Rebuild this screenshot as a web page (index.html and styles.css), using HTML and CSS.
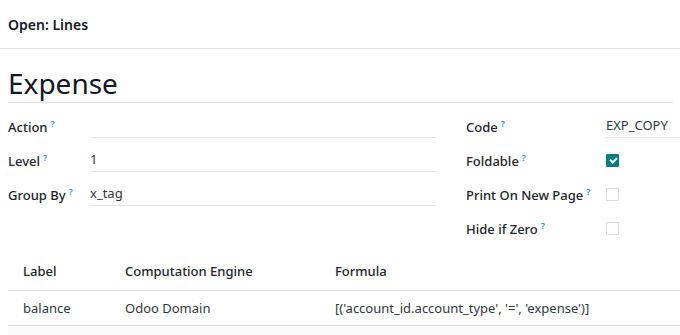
FILE: index.html
```html
<!DOCTYPE html>
<html lang="en">
<head>
    <meta charset="UTF-8">
    <title>Open: Lines</title>
    <link rel="stylesheet" href="styles.css">
</head>
<body>
    <!-- Dialog header -->
    <div class="modal-header">
        <h4>Open: Lines</h4>
    </div>

    <div class="sheet">
        <!-- Title -->
        <h1 class="title">Expense</h1>

        <!-- Fields -->
        <div class="groups">
            <div class="group group-left">
                <div class="row">
                    <label>Action<sup>?</sup></label>
                    <div class="field"></div>
                </div>
                <div class="row">
                    <label>Level<sup>?</sup></label>
                    <div class="field">1</div>
                </div>
                <div class="row">
                    <label>Group By<sup>?</sup></label>
                    <div class="field">x_tag</div>
                </div>
            </div>
            <div class="group group-right">
                <div class="row">
                    <label>Code<sup>?</sup></label>
                    <div class="field">EXP_COPY</div>
                </div>
                <div class="row">
                    <label>Foldable<sup>?</sup></label>
                    <div class="check-cell"><span class="check checked"></span></div>
                </div>
                <div class="row">
                    <label>Print On New Page<sup>?</sup></label>
                    <div class="check-cell"><span class="check"></span></div>
                </div>
                <div class="row">
                    <label>Hide if Zero<sup>?</sup></label>
                    <div class="check-cell"><span class="check"></span></div>
                </div>
            </div>
        </div>

        <!-- Expressions table -->
        <table class="lines">
            <thead>
                <tr>
                    <th class="col-label">Label</th>
                    <th class="col-engine">Computation Engine</th>
                    <th>Formula</th>
                </tr>
            </thead>
            <tbody>
                <tr>
                    <td>balance</td>
                    <td>Odoo Domain</td>
                    <td>[('account_id.account_type', '=', 'expense')]</td>
                </tr>
            </tbody>
        </table>
        <div class="table-rest"></div>
    </div>
</body>
</html>
```

FILE: styles.css
```css
/* General */
body {
    margin: 0;
    font-family: "Noto Sans", Arial, sans-serif;
    font-size: 13px;
    color: #2f3740;
    background-color: white;
    overflow: hidden;
}

/* Dialog header */
.modal-header {
    height: 48px;
    border-bottom: 1px solid #dee2e6;
    display: flex;
    align-items: center;
    padding-left: 8px;
}

.modal-header h4 {
    margin: 0;
    font-size: 14px;
    font-weight: 600;
    color: #111827;
}

/* Sheet */
.sheet {
    padding-left: 8px;
}

.title {
    margin: 15px 7px 0 0;
    font-size: 28px;
    font-weight: 400;
    line-height: 38px;
    color: #111827;
    border-bottom: 1px solid #e2e2e2;
}

.groups {
    display: flex;
    gap: 30px;
    margin-top: 11px;
}

.group-left {
    width: 428px;
}

.group-right {
    flex: 1;
}

.row {
    display: grid;
    grid-template-columns: 82px 1fr;
    height: 24px;
    margin-bottom: 10px;
    align-items: center;
}

.group-right .row {
    grid-template-columns: 140px 1fr;
}

label {
    font-weight: 500;
    color: #212529;
    white-space: nowrap;
}

sup {
    color: #1a96b8;
    font-size: 9px;
    font-weight: 600;
    margin-left: 3px;
    vertical-align: 5px;
}

.field {
    height: 24px;
    line-height: 23px;
    box-sizing: border-box;
    border-bottom: 1px solid #e5e7eb;
}

.check-cell {
    display: flex;
    align-items: center;
}

.check {
    width: 13px;
    height: 13px;
    box-sizing: border-box;
    border: 1px solid #d8dadd;
    border-radius: 1px;
    position: relative;
}

.check.checked {
    background-color: #017e84;
    border-color: #017e84;
}

.check.checked::after {
    content: "";
    position: absolute;
    left: 3px;
    top: 2px;
    width: 5px;
    height: 3px;
    border-left: 2px solid white;
    border-bottom: 2px solid white;
    transform: rotate(-45deg);
}

/* Table */
.lines {
    width: 100%;
    border-collapse: collapse;
    margin-top: 1px;
}

.lines th {
    text-align: left;
    font-weight: 500;
    color: #212529;
    height: 39px;
    padding: 0 8px;
    border-bottom: 1px solid #dcdcdc;
}

.lines td {
    height: 34px;
    padding: 0 8px;
    border-bottom: 1px solid #dcdcdc;
}

.lines th:first-child,
.lines td:first-child {
    padding-left: 15px;
}

.col-label {
    width: 86px;
}

.col-engine {
    width: 194px;
}

.table-rest {
    height: 20px;
    background-color: #fbfbfb;
}
```
